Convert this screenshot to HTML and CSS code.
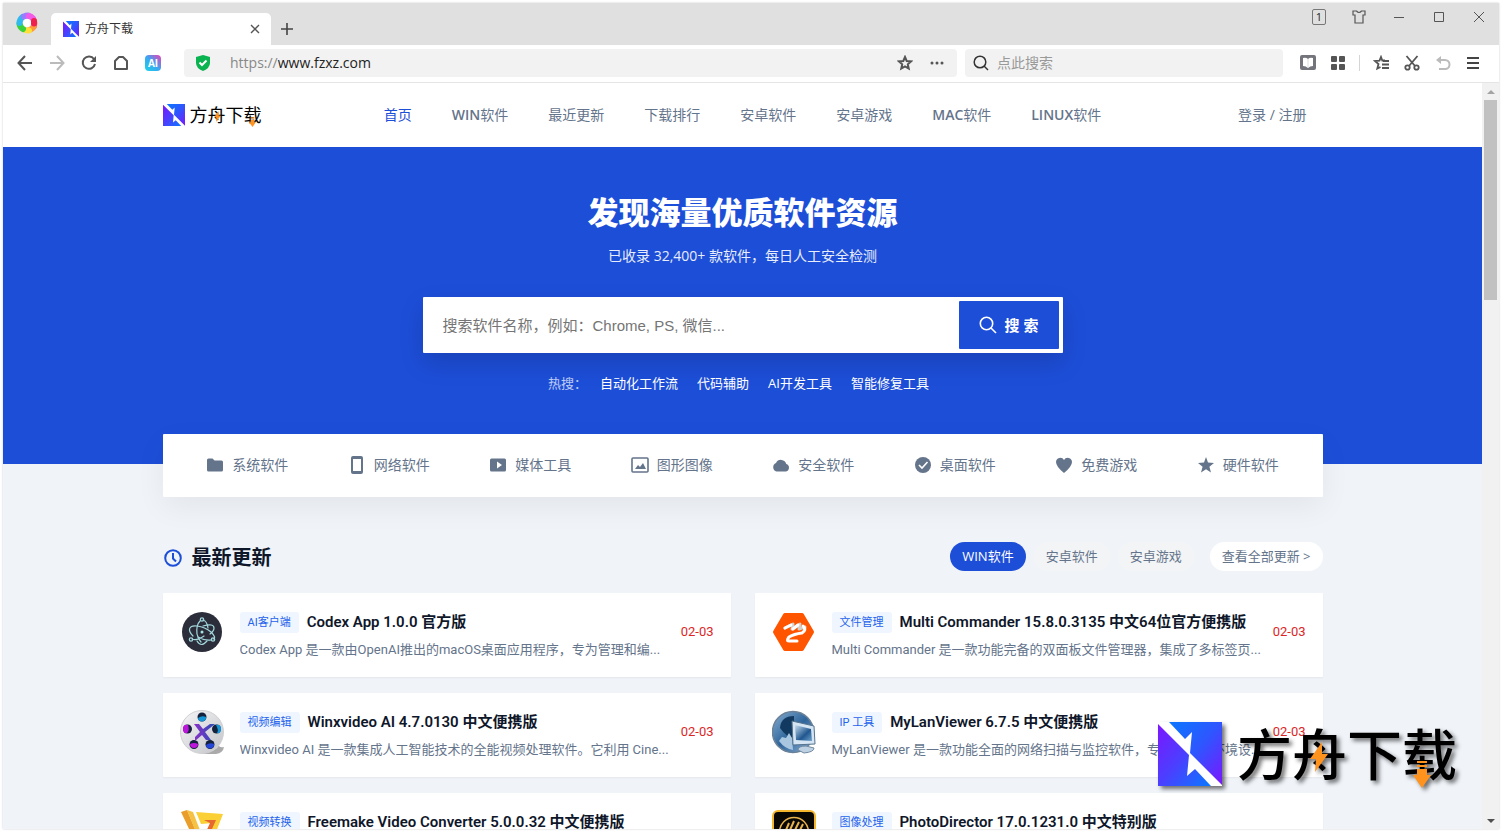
FILE: index.html
```html
<!DOCTYPE html>
<html lang="zh-CN">
<head>
<meta charset="utf-8">
<title>方舟下载</title>
<link rel="stylesheet" href="styles.css">
</head>
<body>
<svg class="defs" aria-hidden="true">
  <defs>
    <linearGradient id="markA" x1="0" y1="0" x2="1" y2="1"><stop offset="0" stop-color="#0a78ff"/><stop offset=".5" stop-color="#2f55ff"/><stop offset="1" stop-color="#7c16ff"/></linearGradient>
    <linearGradient id="markB" x1="0" y1="0" x2="1" y2="1"><stop offset="0" stop-color="#7c16ff"/><stop offset=".5" stop-color="#4a40ff"/><stop offset="1" stop-color="#0a78ff"/></linearGradient>
    <symbol id="mark" viewBox="0 0 64 64">
      <path fill="#fff" d="M0 0h64v64H0z"/>
      <path fill="url(#markA)" d="M11 0H64V63L32 31 34 10 27 17z"/>
      <path fill="url(#markB)" d="M0 2L31 33 29 54 37 47 53 64H0z"/>
    </symbol>
    <symbol id="bolt" viewBox="0 0 18 30"><path fill="#ff931e" d="M12 0L0 17h6L5 30 18 12h-6z"/></symbol>
    <symbol id="down" viewBox="0 0 18 27"><path fill="#ff931e" d="M4 0h10v2H4zM4 4h10v2H4zM4 8h10v6h4L9 27 0 14h4z"/></symbol>
  </defs>
</svg>
<div class="window">
  <header class="titlebar">
    <svg class="browser-logo" viewBox="0 0 24 24" fill="none" stroke-width="6" stroke-linecap="round">
      <path stroke="#ff5a4a" d="M19 10a8 8 0 0 1 0 5"/><path stroke="#ff9a3c" d="M18.500 16a8 8 0 0 1-4 3"/>
      <path stroke="#ffe03a" d="M14 19.500a8 8 0 0 1-5-1"/><path stroke="#3ad13a" d="M8 18a8 8 0 0 1-3.500-5"/>
      <path stroke="#2fb9ee" d="M4.500 12a8 8 0 0 1 3-6"/><path stroke="#9d7bff" d="M9 5.500a8 8 0 0 1 4-1"/>
      <path stroke="#f25be8" d="M14 5a8 8 0 0 1 4 2.500"/><path stroke="#f0204e" d="M19 10v2.500"/>
      <circle cx="12" cy="12" r="4" fill="#fff" stroke="none"/>
    </svg>
    <div class="tab">
      <svg class="tab-mark"><use href="#mark"/></svg>
      <span class="tab-title">方舟下载</span>
      <button class="plain tab-close" aria-label="关闭标签"><svg width="10" height="10" viewBox="0 0 10 10" stroke="#555" stroke-width="1.400"><path d="M1 1l8 8M9 1L1 9"/></svg></button>
    </div>
    <button class="plain new-tab" aria-label="新标签"><svg width="12" height="12" viewBox="0 0 12 12" stroke="#444" stroke-width="1.600"><path d="M6 0v12M0 6h12"/></svg></button>
    <div class="controls">
      <button class="plain control"><span class="count">1</span></button>
      <button class="plain control" aria-label="皮肤"><svg width="14" height="14" viewBox="0 0 14 14" fill="none" stroke="#555" stroke-width="1.200"><path d="M4.500 1H1v4h2v8h8V5h2V1H9.500Q7 4 4.500 1z"/></svg></button>
      <button class="plain control" aria-label="最小化"><svg width="10" height="10" viewBox="0 0 10 10" stroke="#555"><path d="M0 5.500h10"/></svg></button>
      <button class="plain control" aria-label="最大化"><svg width="10" height="10" viewBox="0 0 10 10" stroke="#555" fill="none"><path d="M.5.5h9v9h-9z"/></svg></button>
      <button class="plain control" aria-label="关闭"><svg width="12" height="12" viewBox="0 0 12 12" stroke="#555"><path d="M1 1l10 10M11 1L1 11"/></svg></button>
    </div>
  </header>

  <div class="toolbar">
    <button class="plain tool" aria-label="后退"><svg width="16" height="16" viewBox="0 0 16 16" fill="none" stroke="#555" stroke-width="2"><path d="M15 8H2M8 1L1.500 8 8 15"/></svg></button>
    <button class="plain tool" aria-label="前进"><svg width="16" height="16" viewBox="0 0 16 16" fill="none" stroke="#bbb" stroke-width="2"><path d="M1 8h13M8 1l6.500 7L8 15"/></svg></button>
    <button class="plain tool" aria-label="刷新"><svg width="16" height="16" viewBox="0 0 16 16" fill="none" stroke="#555" stroke-width="2"><path d="M13 4a6.200 6.200 0 1 0 1 5"/><path d="M15 1v6H9z" fill="#555" stroke="none"/></svg></button>
    <button class="plain tool" aria-label="主页"><svg width="16" height="16" viewBox="0 0 16 16" fill="none" stroke="#555" stroke-width="2" stroke-linejoin="round"><path d="M2 6L6 2h4l4 4v8H2z"/></svg></button>
    <button class="plain tool" aria-label="AI"><span class="ai">AI</span></button>
    <div class="address">
      <svg width="16" height="16" viewBox="0 0 16 16"><path fill="#09b34f" d="M8 0l7 2v6q0 5-7 8-7-3-7-8V2z"/><path fill="none" stroke="#fff" stroke-width="2" d="M4.500 7.500L7 10l4.500-4.500"/></svg>
      <span class="url"><span class="scheme">https://</span>www.fzxz.com</span>
      <button class="plain tool" aria-label="收藏"><svg width="16" height="16" viewBox="0 0 16 16" fill="none" stroke="#555" stroke-width="2"><path d="M8 2l1.700 4 4.300.4-3.200 2.900.9 4.200L8 11.300 4.300 13.500l.9-4.200L2 6.400 6.300 6z"/></svg></button>
      <button class="plain tool" aria-label="更多"><svg width="14" height="4" viewBox="0 0 14 4" fill="#555"><circle cx="2" cy="2" r="1.500"/><circle cx="7" cy="2" r="1.500"/><circle cx="12" cy="2" r="1.500"/></svg></button>
    </div>
    <label class="quick">
      <svg width="16" height="16" viewBox="0 0 16 16" fill="none" stroke="#333" stroke-width="1.500"><circle cx="7" cy="7" r="5.800"/><path d="M11 11l4 4"/></svg>
      <input class="quick-input" type="text" placeholder="点此搜索" aria-label="点此搜索">
    </label>
    <div class="extras">
      <button class="plain extra" aria-label="阅读"><svg width="16" height="16" viewBox="0 0 16 16"><rect width="16" height="15" rx="2" fill="#74747c"/><path fill="#fff" d="M3 3q3-1 5 1 2-2 5-1v8q-3 0-5 2-2-2-5-2z"/><path stroke="#ddd" d="M8 4v8"/></svg></button>
      <button class="plain extra" aria-label="应用"><svg width="14" height="14" viewBox="0 0 14 14" fill="#555"><rect width="6" height="6" rx="1"/><rect x="8" width="6" height="6" rx="1"/><rect y="8" width="6" height="6" rx="1"/><rect x="8" y="8" width="6" height="6" rx="1"/></svg></button>
      <span class="divider"></span>
      <button class="plain extra" aria-label="收藏夹"><svg width="16" height="16" viewBox="0 0 16 16" fill="none" stroke="#555" stroke-width="1.800"><path d="M12 5.500H9.300L8 2 6.500 5.700 2 6l3.500 3-1.200 4.500L7.500 12"/><path d="M10 6h6M9 9.500h7M9 13h7"/></svg></button>
      <button class="plain extra wide" aria-label="截图"><svg width="16" height="16" viewBox="0 0 16 16" fill="none" stroke="#555" stroke-width="1.800"><path d="M2.500 1l8.500 10M13.500 1L5 11"/><circle cx="3.500" cy="12.500" r="2.200"/><circle cx="12.500" cy="12.500" r="2.200"/></svg></button>
      <button class="plain extra" aria-label="恢复"><svg width="16" height="16" viewBox="0 0 16 16" fill="none" stroke="#bbb" stroke-width="2"><path d="M3 5h7a4.500 4.500 0 0 1 0 9H4"/><path d="M1 5l5-4v8z" fill="#bbb" stroke="none"/></svg></button>
      <button class="plain extra" aria-label="菜单"><svg width="12" height="12" viewBox="0 0 12 12" stroke="#444" stroke-width="2"><path d="M0 1h12M0 6h12M0 11h12"/></svg></button>
    </div>
  </div>

  <div class="viewport">
    <div class="page">
      <header class="site-header">
        <div class="container header-grid">
          <a class="brand" href="#"><svg class="brand-mark"><use href="#mark"/></svg><span class="brand-name">方舟下载<svg class="brand-bolt"><use href="#bolt"/></svg><svg class="brand-down"><use href="#down"/></svg></span></a>
          <nav class="nav"><a class="current" href="#">首页</a><a href="#"><span class="latin">WIN</span>软件</a><a href="#">最近更新</a><a href="#">下载排行</a><a href="#">安卓软件</a><a href="#">安卓游戏</a><a href="#"><span class="latin">MAC</span>软件</a><a href="#"><span class="latin">LINUX</span>软件</a></nav>
          <a class="login" href="#">登录 / 注册</a>
        </div>
      </header>
      <section class="hero">
        <h1 class="hero-title">发现海量优质软件资源</h1>
        <p class="hero-sub">已收录 32,400+ 款软件，每日人工安全检测</p>
        <form class="search">
          <input class="search-input" type="text" aria-label="搜索软件" placeholder="搜索软件名称，例如：Chrome, PS, 微信...">
          <button class="search-button" type="button"><svg width="18" height="18" viewBox="0 0 18 18" fill="none" stroke="#fff" stroke-width="1.600"><circle cx="7.500" cy="7.500" r="6.200"/><path d="M12 12l5 5"/></svg>搜 索</button>
        </form>
        <div class="hot"><span class="hot-label">热搜：</span><a href="#">自动化工作流</a><a href="#">代码辅助</a><a href="#">AI开发工具</a><a href="#">智能修复工具</a></div>
      </section>
      <nav class="container categories">
        <a href="#"><svg viewBox="0 0 18 18"><path d="M1 4q0-1.500 1.500-1.500h4L8.500 4.500h7Q17 4.500 17 6v8q0 1.500-1.500 1.500h-13Q1 15.500 1 14z"/></svg>系统软件</a>
        <a href="#"><svg viewBox="0 0 18 18"><path fill-rule="evenodd" d="M5 0h8q2 0 2 2v14q0 2-2 2H5q-2 0-2-2V2q0-2 2-2zM5 3v12h8V3z"/></svg>网络软件</a>
        <a href="#"><svg viewBox="0 0 18 18"><path fill-rule="evenodd" d="M2.500 2.500h13Q17 2.500 17 4v10q0 1.500-1.500 1.500h-13Q1 15.500 1 14V4q0-1.500 1.500-1.500zM8 5.500v7L13 9z"/></svg>媒体工具</a>
        <a href="#"><svg viewBox="0 0 18 18"><rect x="1" y="2" width="16" height="14" rx="1" fill="none" stroke="#64748b" stroke-width="1.600"/><path d="M4 13l3-4 2 2 3-4 3 6z"/></svg>图形图像</a>
        <a href="#"><svg viewBox="0 0 18 18"><path d="M4.500 15.500A4.500 4.500 0 0 1 4 7a5.500 5.500 0 0 1 10.300 1A3.900 3.900 0 0 1 14 15.500z"/></svg>安全软件</a>
        <a href="#"><svg viewBox="0 0 18 18"><circle cx="9" cy="9" r="8"/><path fill="none" stroke="#fff" stroke-width="1.600" d="M5 9l3 3 5.500-6"/></svg>桌面软件</a>
        <a href="#"><svg viewBox="0 0 18 18"><path d="M9 17Q1 10.500 1 6a4.300 4.300 0 0 1 8-2 4.300 4.300 0 0 1 8 2Q17 10.500 9 17z"/></svg>免费游戏</a>
        <a href="#"><svg viewBox="0 0 18 18"><path d="M9 1l2 5.500 6 .4-4.600 3.800L14 16.500l-5-3.300-5 3.300 1.600-5.800L1 6.900l6-.4z"/></svg>硬件软件</a>
      </nav>

      <section class="container latest">
        <div class="latest-head">
          <h2 class="latest-title"><svg width="20" height="20" viewBox="0 0 20 20" fill="none" stroke="#1d4ed8" stroke-width="2"><circle cx="10" cy="10" r="7.800"/><path d="M10 5v5.500l3 3"/></svg>最新更新</h2>
          <div class="pills"><button class="pill active">WIN软件</button><button class="pill">安卓软件</button><button class="pill">安卓游戏</button><a class="pill all" href="#">查看全部更新 &gt;</a></div>
        </div>
        <div class="cards">
          <article class="card">
            <svg class="app-icon" viewBox="0 0 44 44"><circle cx="22" cy="22" r="20" fill="#2b2e3a"/><g fill="none" stroke="#a3d8de" stroke-width="1.200" stroke-linecap="round"><path d="M13 26C7 20 9 15 17 16q8 1 14 6 6 6 2 7"/><path d="M23 10q4 1 5 8M20 11q-4 4-3 13 1 5 4 8"/><path d="M23 16q11-3 11 2 0 3-4 6M31 30q-6 1-13-3M12 29q5 2 12-3"/><path d="M17 31q4 7 10 0"/><circle cx="22" cy="9.500" r="1.700"/><circle cx="11" cy="29.500" r="1.700"/><circle cx="33" cy="29.500" r="1.700"/></g><circle cx="22" cy="22" r="1.500" fill="#a3e6e8"/></svg>
            <div class="info"><h3 class="name"><span class="tag">AI客户端</span>Codex App 1.0.0 官方版</h3><p class="desc">Codex App 是一款由OpenAI推出的macOS桌面应用程序，专为管理和编...</p></div>
            <time class="date">02-03</time>
          </article>
          <article class="card">
            <svg class="app-icon" viewBox="0 0 44 44"><path fill="#ff5500" stroke="#ff5500" stroke-width="4" stroke-linejoin="round" d="M13 5h17l10 17-10 17H13L3 22z"/><g fill="none" stroke-linecap="round" stroke-linejoin="round" stroke-width="3"><path stroke="#d5cfca" d="M13 18l8-4-1 5 8-5-1 5 6-2"/><path stroke="#fff" d="M31 16q4 4-1 7-8 1-13 4-3 4 0 4h8"/><path stroke="#fff" d="M13 18l6-3M21 19l5-4"/></g></svg>
            <div class="info"><h3 class="name"><span class="tag">文件管理</span>Multi Commander 15.8.0.3135 中文64位官方便携版</h3><p class="desc">Multi Commander 是一款功能完备的双面板文件管理器，集成了多标签页...</p></div>
            <time class="date">02-03</time>
          </article>
          <article class="card">
            <svg class="app-icon" viewBox="0 0 44 44"><defs><linearGradient id="reel" x2="1" y2="1"><stop stop-color="#f6f6f8"/><stop offset="1" stop-color="#c3c4c8"/></linearGradient><linearGradient id="xx" x2="1"><stop stop-color="#8b2fc9"/><stop offset="1" stop-color="#294fb6"/></linearGradient></defs><path fill="#aaa" d="M18 42q18 1 21-7 0 3 5 2-1 6-8 7H22z"/><circle cx="22" cy="22" r="21.500" fill="url(#reel)" stroke="#d0d0d4"/><g fill="#14213d"><circle cx="22" cy="7" r="4.500"/><circle cx="7.500" cy="19" r="4.500"/><circle cx="36.500" cy="19" r="4.500"/><circle cx="14" cy="34.500" r="4.500"/><circle cx="30" cy="34.500" r="4.500"/></g><path fill="#1695d6" d="M18 8q4-3 8-1a4 4 0 0 1-8 1zM36 15q5-1 5 4t-4 4q2-3-1-8z"/><path fill="#bd17dc" d="M8 15q-5-1-5 4t4 4q3-3 1-8zM10 34q4-2 8 0a4 4 0 0 1-8 0z"/><path fill="#2547d9" d="M26 35q4-3 8-1a4 4 0 0 1-8 1z"/><path fill="url(#xx)" d="M14 14h5l4 5 7-5h5l-10 8 6 8h-5l-4-5-7 6v-4l5-5z"/></svg>
            <div class="info"><h3 class="name"><span class="tag">视频编辑</span>Winxvideo AI 4.7.0130 中文便携版</h3><p class="desc">Winxvideo AI 是一款集成人工智能技术的全能视频处理软件。它利用 Cine...</p></div>
            <time class="date">02-03</time>
          </article>
          <article class="card">
            <svg class="app-icon" viewBox="0 0 44 44"><defs><linearGradient id="globe" x2="1" y2="1"><stop stop-color="#87afd2"/><stop offset=".5" stop-color="#2f659b"/><stop offset="1" stop-color="#8fb4d6"/></linearGradient><linearGradient id="lcd" x2="1" y2="1"><stop stop-color="#c8def0"/><stop offset=".6" stop-color="#20578f"/><stop offset="1" stop-color="#6ea0cc"/></linearGradient></defs><circle cx="21" cy="22" r="20.500" fill="url(#globe)" stroke="#6b8196" stroke-width="1.500"/><path fill="#12395f" d="M8 18Q9 6 22 6v22q-7 0-14-10z"/><path fill="#a9c6e0" d="M7 31l3-4 4 1 3-5 3 5 1 12q-8-1-14-9z"/><path fill="#d5e5f3" stroke="#54738f" d="M20 11l22 5 1 18-22 1z"/><path fill="url(#lcd)" d="M23 15l16 4 1 12-16-1z"/><path fill="#bdd1e3" stroke="#718aa2" d="M26 40q0-4 8-4l8 2q0 4-10 5z"/></svg>
            <div class="info"><h3 class="name"><span class="tag">IP 工具</span>MyLanViewer 6.7.5 中文便携版</h3><p class="desc">MyLanViewer 是一款功能全面的网络扫描与监控软件，专为局域网环境设...</p></div>
            <time class="date">02-03</time>
          </article>
          <article class="card">
            <svg class="app-icon" viewBox="0 0 44 44"><path fill="#e99d2b" d="M1 2l6-2 17 40h-5z"/><path fill="#f6c244" d="M7 0l6 2 13 34-2 6z"/><path fill="#fbcf36" d="M16 2l27 2-14 36-6-8 10-19-12 1z"/><path fill="#e66a2e" d="M24 10h12L28 28l-3-4 5-11z"/></svg>
            <div class="info"><h3 class="name"><span class="tag">视频转换</span>Freemake Video Converter 5.0.0.32 中文便携版</h3></div>
          </article>
          <article class="card">
            <svg class="app-icon" viewBox="0 0 44 44"><rect x="1" y="1" width="42" height="42" rx="5" fill="#080704" stroke="#f4b62d" stroke-width="2"/><g fill="none" stroke="#e9b24b" stroke-width="1.500"><circle cx="22" cy="22" r="14.500"/><path stroke-width="2" d="M14 20l3-7M18 20l4-9M23 20l4-8M28 20l3-6"/></g></svg>
            <div class="info"><h3 class="name"><span class="tag">图像处理</span>PhotoDirector 17.0.1231.0 中文特别版</h3></div>
          </article>
        </div>
      </section>
    </div>
    <div class="scrollbar"><span class="arrow up"></span><span class="thumb"></span><span class="arrow down"></span></div>
  </div>
</div>
<div class="watermark"><svg class="wm-mark"><use href="#mark"/></svg><span class="wm-name">方舟下载<svg class="wm-bolt"><use href="#bolt"/></svg><svg class="wm-down"><use href="#down"/></svg></span></div>
</body>
</html>
```
FILE: styles.css
```css
* { box-sizing: border-box; }
body {
  margin: 0;
  height: 100vh;
  padding: 3px 4px 4px 3px;
  display: flex;
  overflow: hidden;
  background: #fff;
  color: #64748b;
  font: 14px/20px "Open Sans", "Noto Sans CJK SC", sans-serif;
}
a { color: inherit; text-decoration: none; }
h1, h2, h3, p { margin: 0; }
button, input { font: inherit; color: inherit; }
svg { display: block; flex: none; }
.defs { position: absolute; width: 0; height: 0; }
.plain { display: flex; align-items: center; justify-content: center; border: 0; padding: 0; background: none; }

/* Browser frame */
.window { flex: 1; min-width: 0; display: flex; flex-direction: column; box-shadow: 0 0 2px #ccc; }
.titlebar { display: flex; flex: none; height: 42px; background: #e0e0e0; }
.browser-logo { width: 24px; height: 24px; margin: 8px 12px 0; }
.tab { display: flex; align-items: center; width: 220px; height: 32px; margin-top: 10px; padding: 0 10px 0 12px; background: #fff; border-radius: 5px 5px 0 0; color: #333; font-size: 12px; }
.tab-mark { width: 16px; height: 16px; }
.tab-title { flex: 1; margin-left: 6px; }
.tab-close { width: 12px; height: 20px; }
.new-tab { width: 32px; height: 32px; margin-top: 10px; }
.controls { display: flex; margin-left: auto; }
.control { width: 40px; height: 28px; }
.count { width: 14px; height: 16px; border: 1px solid #777; border-radius: 2px; color: #222; font-size: 11px; line-height: 14px; }
.toolbar { display: flex; flex: none; align-items: center; height: 38px; padding: 0 11px 1px 6px; border-bottom: 1px solid #e5e5e5; }
.tool { width: 32px; height: 28px; }
.ai { width: 16px; height: 16px; border-radius: 4px; background: linear-gradient(45deg, #19d3e6, #3ba6f2 50%, #f03ab5); color: #fff; font-size: 10px; font-weight: 700; line-height: 16px; }
.address { display: flex; flex: 1; align-items: center; height: 28px; margin-left: 15px; padding: 0 4px 0 11px; background: #f2f2f2; border-radius: 4px; }
.url { flex: 1; margin-left: 19px; color: #222; font-size: 14px; }
.scheme { color: #888; }
.quick { display: flex; align-items: center; width: 318px; height: 28px; margin-left: 8px; padding: 0 8px; background: #f2f2f2; border-radius: 4px; }
.quick-input { flex: 1; min-width: 0; margin-left: 8px; padding: 0; border: 0; background: none; }
.quick-input::placeholder { color: #999; }
.extras { display: flex; align-items: center; margin-left: 10px; }
.extra { width: 30px; height: 28px; }
.wide { width: 32px; }
.divider { width: 1px; height: 16px; margin: 0 6px; background: #d5d5d5; }

/* Page area */
.viewport { display: flex; flex: 1; min-height: 0; overflow: hidden; }
.page { flex: 1; min-width: 0; overflow: hidden; background: #f0f4f9; }
.scrollbar { display: flex; flex-direction: column; align-items: center; width: 17px; background: #f1f1f1; }
.thumb { width: 13px; height: 200px; margin-bottom: auto; background: #c1c1c1; }
.arrow { flex: none; width: 17px; height: 17px; display: grid; place-items: center; }
.arrow::before { content: ""; border: 4px solid transparent; }
.up::before { border-top: 0; border-bottom-color: #a3a3a3; }
.down::before { border-bottom: 0; border-top-color: #505050; }
.container { width: 100%; max-width: 1160px; margin: 0 auto; }

.site-header { background: #fff; }
.header-grid { display: grid; grid-template-columns: 1fr auto 1fr; align-items: center; height: 64px; }
.brand { display: flex; align-items: center; gap: 5px; }
.brand-mark { width: 22px; height: 22px; }
.brand-name { position: relative; color: #000; font-size: 18px; line-height: 24px; }
.brand-bolt { position: absolute; left: 24px; top: 8px; width: 7px; height: 11px; }
.brand-down { position: absolute; left: 59px; top: 14px; width: 7px; height: 10px; }
.nav { display: flex; gap: 40px; }
.latin { font-weight: 600; }
.current { color: #1d4ed8; }
.login { justify-self: end; padding-right: 16px; }

.hero { display: flex; flex-direction: column; align-items: center; padding: 46px 16px 71px; background: #1d4ed8; color: #fff; }
.hero-title { font-size: 31px; line-height: 38px; font-weight: 900; }
.hero-sub { margin-top: 15px; opacity: .9; }
.search { display: flex; width: 100%; max-width: 640px; height: 56px; margin-top: 31px; padding: 4px; background: #fff; border-radius: 1px; box-shadow: 0 10px 25px rgba(0, 0, 0, .15); }
.search-input { flex: 1; min-width: 0; padding: 0 16px; border: 0; background: none; font: 15px "Liberation Sans", "Noto Sans CJK SC", sans-serif; }
.search-input::placeholder { color: #757575; }
.search-button { display: flex; align-items: center; justify-content: center; gap: 8px; width: 100px; padding: 0; border: 0; border-radius: 1px; background: #1d4ed8; color: #fff; font-size: 15px; font-weight: 600; }
.hot { display: flex; gap: 19px; margin: 20px 8px 0 0; font-size: 13px; }
.hot-label { opacity: .7; margin-right: -6px; }

.categories { position: relative; display: grid; grid-template-columns: repeat(8, 1fr); height: 63px; margin-top: -30px; padding: 0 14px 1px; background: #fff; border-radius: 1px; box-shadow: 0 10px 30px rgba(0, 0, 0, .06); }
.categories a { display: flex; align-items: center; justify-content: center; gap: 8px; }
.categories svg { width: 18px; height: 18px; fill: #64748b; }

.latest { margin-top: 45px; }
.latest-head { display: flex; align-items: center; justify-content: space-between; height: 29px; margin-bottom: 22px; }
.latest-title { display: flex; align-items: center; gap: 9px; padding-top: 2px; color: #0f172a; font-size: 20px; line-height: 29px; }
.pills { display: flex; gap: 8px; }
.pill { height: 29px; padding: 0 12px; border: 0; border-radius: 15px; background: #f3f4f6; font-size: 13px; line-height: 29px; }
.active { background: #1d4ed8; color: #fff; }
.all { margin-left: 8px; background: #fff; }
.cards { display: grid; grid-template-columns: repeat(2, minmax(0, 1fr)); gap: 16px 24px; }
.card { display: flex; align-items: flex-start; min-height: 84px; padding: 17px; background: #fff; border-radius: 1px; box-shadow: 0 1px 2px rgba(0, 0, 0, .05); font-family: Roboto, "Noto Sans CJK SC", sans-serif; }
.app-icon { width: 44px; height: 44px; }
.info { flex: 1; min-width: 0; margin: 0 12px 0 16px; }
.name { display: flex; align-items: center; gap: 8px; height: 24px; color: #0f172a; font-size: 15px; font-weight: 600; white-space: nowrap; }
.tag { padding: 0 8px; border-radius: 3px; background: #eff6ff; color: #2563eb; font-size: 11px; font-weight: 400; line-height: 21px; }
.desc { margin-top: 6px; overflow: hidden; font-size: 13px; white-space: nowrap; }
.date { color: #dc2626; font-size: 13px; line-height: 44px; }

/* Floating brand stamp */
.watermark { position: fixed; right: 46px; bottom: 47px; display: flex; align-items: center; gap: 15px; filter: drop-shadow(3px 3px 2px rgba(0, 0, 0, .55)); }
.wm-mark { width: 64px; height: 64px; }
.wm-name { position: relative; color: #000; font-size: 55px; font-weight: 500; line-height: 64px; }
.wm-bolt { position: absolute; left: 73px; top: 20px; width: 18px; height: 30px; }
.wm-down { position: absolute; left: 176px; top: 39px; width: 18px; height: 27px; }
```
